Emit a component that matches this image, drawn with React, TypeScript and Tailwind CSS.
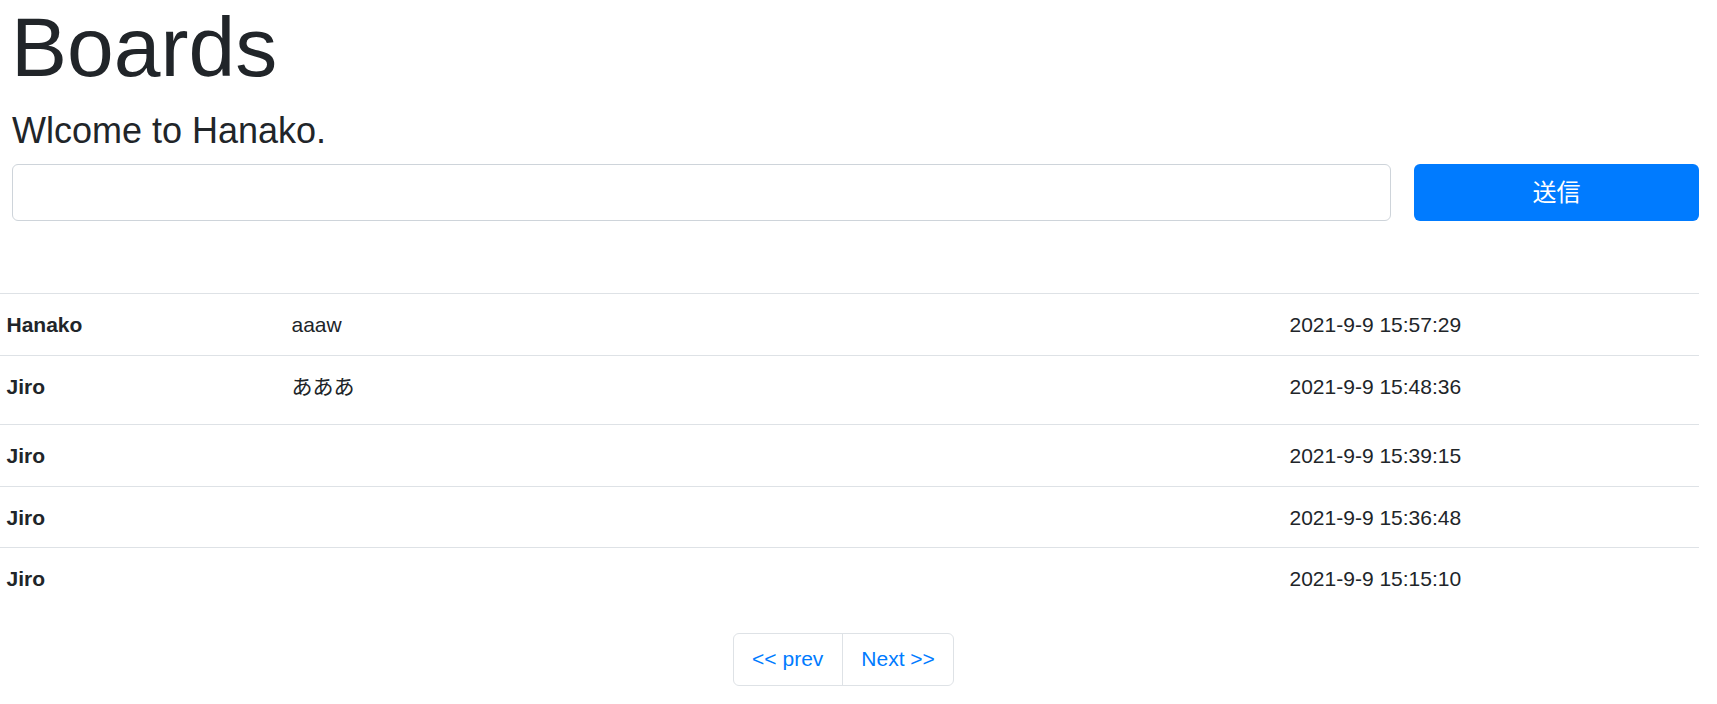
import React from "react";

const rows = [
  { name: "Hanako", msg: "aaaw", date: "2021-9-9 15:57:29", tall: false },
  { name: "Jiro", msg: "あああ", date: "2021-9-9 15:48:36", tall: true },
  { name: "Jiro", msg: "", date: "2021-9-9 15:39:15", tall: false },
  { name: "Jiro", msg: "", date: "2021-9-9 15:36:48", tall: false },
  { name: "Jiro", msg: "", date: "2021-9-9 15:15:10", tall: false },
];

export default function App() {
  return (
    <div
      className="w-[1699px] bg-white text-[#212529]"
      style={{ fontFamily: '"Liberation Sans", Arial, "Noto Sans CJK JP", sans-serif' }}
    >
      <h1 className="mt-[5px] pl-[11px] text-[84px] leading-[84px] font-normal">Boards</h1>
      <h4 className="mt-[20px] pl-[12px] text-[36px] leading-[43.2px] font-normal">Wlcome to Hanako.</h4>
      <div className="mt-[12px] flex pl-[12px] gap-[23px]">
        <input
          type="text"
          className="h-[57px] w-[1379px] rounded-[6px] border border-[#ced4da] bg-white px-[18px] text-[21px] outline-none"
        />
        <button className="flex h-[57px] flex-1 items-center justify-center rounded-[6px] bg-[#007bff] text-[24px] text-white">
          送信
        </button>
      </div>
      <div className="mt-[72px]">
        {rows.map((r, i) => (
          <div
            key={i}
            className="grid grid-cols-[286px_997px_1fr] border-t border-[#dee2e6] text-[21px] leading-[31.5px]"
          >
            <div className={`pl-[6.5px] pt-[15px] font-bold ${r.tall ? "pb-[22px]" : "pb-[14px]"}`}>{r.name}</div>
            <div className={`pl-[5.5px] pt-[15px] ${r.tall ? "pb-[22px]" : "pb-[14px]"}`}>
              <span className="leading-none">{r.msg}</span>
            </div>
            <div className={`pl-[6.5px] pt-[15px] ${r.tall ? "pb-[22px]" : "pb-[14px]"}`}>{r.date}</div>
          </div>
        ))}
      </div>
      <div className="mt-[24px] flex w-[1687px] justify-center">
        <div className="flex h-[53px] rounded-[6px] border border-[#dee2e6] text-[21px] leading-[31.5px] text-[#007bff]">
          <div className="flex items-center border-r border-[#dee2e6] px-[18.5px]">&lt;&lt; prev</div>
          <div className="flex items-center px-[18.5px]">Next &gt;&gt;</div>
        </div>
      </div>
    </div>
  );
}
